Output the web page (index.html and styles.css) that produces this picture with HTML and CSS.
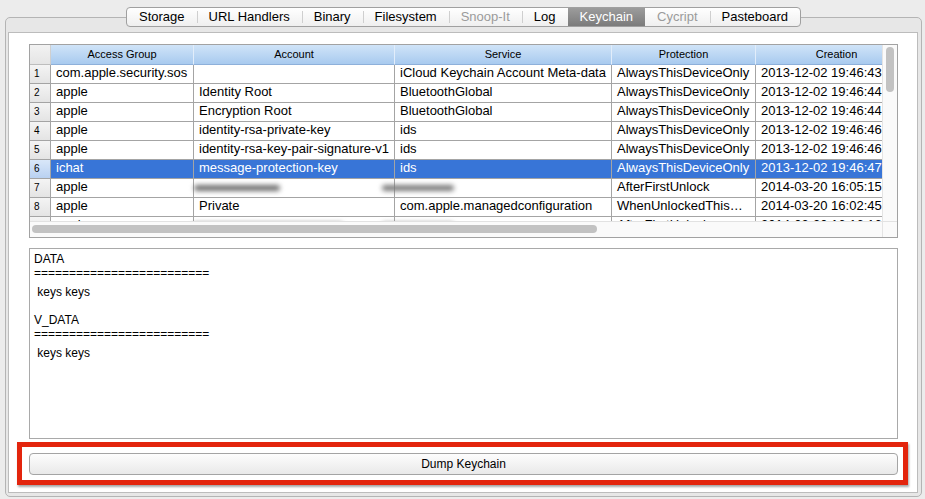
FILE: index.html
```html
<!DOCTYPE html>
<html>
<head>
<meta charset="utf-8">
<title>Keychain</title>
<link rel="stylesheet" href="styles.css">
</head>
<body>
<div class="tabrow">
  <nav class="tabbar">
    <span class="tab">Storage</span>
    <span class="tab">URL Handlers</span>
    <span class="tab">Binary</span>
    <span class="tab">Filesystem</span>
    <span class="tab dis">Snoop-It</span>
    <span class="tab">Log</span>
    <span class="tab sel">Keychain</span>
    <span class="tab dis">Cycript</span>
    <span class="tab">Pasteboard</span>
  </nav>
</div>
<div class="tabbox">
  <div class="panel">
    <div class="scrollpane">
      <div class="sp-main">
        <div class="viewport">
          <div class="row head">
            <div class="c n"></div><div class="c">Access Group</div><div class="c">Account</div><div class="c">Service</div><div class="c">Protection</div><div class="c">Creation</div>
          </div>
          <div class="row">
            <div class="c n">1</div><div class="c">com.apple.security.sos</div><div class="c"></div><div class="c">iCloud Keychain Account Meta-data</div><div class="c">AlwaysThisDeviceOnly</div><div class="c">2013-12-02 19:46:43</div>
          </div>
          <div class="row">
            <div class="c n">2</div><div class="c">apple</div><div class="c">Identity Root</div><div class="c">BluetoothGlobal</div><div class="c">AlwaysThisDeviceOnly</div><div class="c">2013-12-02 19:46:44</div>
          </div>
          <div class="row">
            <div class="c n">3</div><div class="c">apple</div><div class="c">Encryption Root</div><div class="c">BluetoothGlobal</div><div class="c">AlwaysThisDeviceOnly</div><div class="c">2013-12-02 19:46:44</div>
          </div>
          <div class="row">
            <div class="c n">4</div><div class="c">apple</div><div class="c">identity-rsa-private-key</div><div class="c">ids</div><div class="c">AlwaysThisDeviceOnly</div><div class="c">2013-12-02 19:46:46</div>
          </div>
          <div class="row">
            <div class="c n">5</div><div class="c">apple</div><div class="c">identity-rsa-key-pair-signature-v1</div><div class="c">ids</div><div class="c">AlwaysThisDeviceOnly</div><div class="c">2013-12-02 19:46:46</div>
          </div>
          <div class="row sel">
            <div class="c n">6</div><div class="c">ichat</div><div class="c">message-protection-key</div><div class="c">ids</div><div class="c">AlwaysThisDeviceOnly</div><div class="c">2013-12-02 19:46:47</div>
          </div>
          <div class="row">
            <div class="c n">7</div><div class="c">apple</div><div class="c"><span class="smudge s-acc"></span></div><div class="c"><span class="smudge s-svc"></span></div><div class="c">AfterFirstUnlock</div><div class="c">2014-03-20 16:05:15</div>
          </div>
          <div class="row">
            <div class="c n">8</div><div class="c">apple</div><div class="c">Private</div><div class="c">com.apple.managedconfiguration</div><div class="c">WhenUnlockedThis…</div><div class="c">2014-03-20 16:02:45</div>
          </div>
          <div class="row">
            <div class="c n">9</div><div class="c">apple</div><div class="c"><span class="smudge s-acc-long"></span></div><div class="c"><span class="smudge s-svc"></span></div><div class="c">AfterFirstUnlock</div><div class="c">2014-03-20 16:16:16</div>
          </div>
        </div>
        <div class="vscroll"><div class="vthumb"></div></div>
      </div>
      <div class="sp-foot">
        <div class="hscroll"><div class="hthumb"></div></div>
        <div class="corner"></div>
      </div>
    </div>

    <div class="textarea">
      <p>DATA</p>
      <p>=========================</p>
      <p class="gap"> keys keys</p>
      <p class="sec">V_DATA</p>
      <p>=========================</p>
      <p class="gap"> keys keys</p>
    </div>

    <div class="actions">
      <button class="btn">Dump Keychain</button>
      <div class="highlight"></div>
    </div>
  </div>
</div>
</body>
</html>
```

FILE: styles.css
```css
* { box-sizing: border-box; }

body {
  margin: 0;
  width: 925px;
  height: 499px;
  overflow: hidden;
  background: #ececec;
  font-family: "Liberation Sans", Arial, sans-serif;
  color: #000;
}

/* ---------- tabs ---------- */
.tabrow {
  display: flex;
  justify-content: center;
  padding-top: 7px;
  margin: 0 3px 0 5px;
  position: relative;
  z-index: 1;
}

.tabbar {
  display: flex;
  height: 20px;
  border: 1px solid #a0a0a0;
  border-radius: 4px;
  background: linear-gradient(#ffffff, #efefef);
  overflow: hidden;
}

.tab {
  position: relative;
  padding: 1px 12px 0;
  font-size: 13px;
  line-height: 15px;
  white-space: nowrap;
}

.tab + .tab::before {
  content: "";
  position: absolute;
  left: 0;
  top: 3px;
  bottom: 3px;
  width: 1px;
  background: #cfcfcf;
}

.tab.sel {
  background: linear-gradient(#9c9c9c, #7b7b7b);
  color: #fff;
}

.tab.sel::before,
.tab.sel + .tab::before { display: none; }

.tab.dis { color: #9b9b9b; }

/* ---------- tab box ---------- */
.tabbox {
  margin: -10px 3px 0 5px;
  height: 480px;
  border: 1px solid #b4b4b4;
  border-radius: 5px;
  background: #e7e7e7;
  padding: 14px 3px 3px 2px;
}

.panel {
  height: 100%;
  background: #fff;
  border: 1px solid #bcbcbc;
  padding: 11px 19px 0 20px;
  display: flex;
  flex-direction: column;
}

/* ---------- table ---------- */
.scrollpane {
  height: 194px;
  flex: none;
  border: 1px solid #a2a2a2;
  display: flex;
  flex-direction: column;
}

.sp-main {
  display: flex;
  height: 176px;
}

.viewport {
  width: 852px;
  overflow: hidden;
}

.vscroll {
  width: 15px;
  background: #fafafa;
  border-left: 1px solid #e4e4e4;
  padding: 2px 3px 0 3px;
}

.vthumb {
  width: 8px;
  height: 45px;
  border-radius: 4px;
  background: #c2c2c2;
}

.sp-foot {
  display: flex;
  height: 16px;
  border-top: 1px solid #e2e2e2;
}

.hscroll {
  width: 852px;
  background: #fafafa;
  padding: 3px 0 0 2px;
}

.hthumb {
  width: 565px;
  height: 8px;
  border-radius: 4px;
  background: #c2c2c2;
}

.corner {
  width: 15px;
  background: #fafafa;
  border-left: 1px solid #e4e4e4;
}

.row {
  display: grid;
  grid-template-columns: 21px 143px 201px 217px 144px 162px;
  width: 888px;
  height: 19px;
}

.row.head { height: 20px; }

.c {
  border-right: 1px solid #a4a4a4;
  border-bottom: 1px solid #a4a4a4;
  font-size: 13px;
  line-height: 16px;
  padding-left: 5px;
  white-space: nowrap;
}

.c.n {
  font-size: 10px;
  line-height: 17px;
  padding-left: 4px;
  background: linear-gradient(#f4f4f4, #e4e4e4);
}

.head .c {
  background: linear-gradient(#d0e4f8, #a8caef);
  border-right-color: #e2edfa;
  border-bottom-color: #8eb0da;
  font-size: 11px;
  line-height: 18px;
  text-align: center;
  padding: 0;
}

.head .c.n {
  background: linear-gradient(#f2f2f2, #e5e5e5);
  border-right-color: #cfcfcf;
  border-bottom-color: #bdbdbd;
}

.row.sel .c {
  background: #3875d7;
  color: #fff;
}

.row.sel .c.n {
  background: linear-gradient(#d9e7f9, #b9d1f1);
  color: #000;
}

/* blurred (redacted) values */
.smudge {
  display: inline-block;
  height: 6px;
  vertical-align: middle;
  border-radius: 3px;
  background: #6f6f6f;
  filter: blur(2.5px);
}

.s-acc { width: 86px; margin-left: -5px; }
.s-acc-long { width: 150px; margin-left: -6px; }
.s-svc { width: 72px; margin-left: -18px; background: #7a7a7a; }

/* ---------- text area ---------- */
.textarea {
  margin-top: 10px;
  height: 191px;
  flex: none;
  border: 1px solid #a9a9a9;
  padding: 3px 4px;
  font-size: 12px;
  line-height: 14px;
}

.textarea p { margin: 0; white-space: pre; }
.textarea .gap { margin-top: 5px; }
.textarea .sec { margin-top: 14px; }

/* ---------- button ---------- */
.actions {
  margin-top: 14px;
  position: relative;
}

.btn {
  display: block;
  width: 100%;
  height: 22px;
  padding: 0;
  border: 1px solid #a4a4a4;
  border-radius: 4px;
  background: linear-gradient(#fdfdfd, #f3f3f3 50%, #e9e9e9);
  font: 12px "Liberation Sans", Arial, sans-serif;
  color: #000;
}

.highlight {
  position: absolute;
  left: -12px;
  right: -10px;
  top: -11px;
  bottom: -10px;
  border: 5px solid #e3250d;
  box-shadow: 1px 2px 2px rgba(0, 0, 0, 0.35);
  pointer-events: none;
}
```
